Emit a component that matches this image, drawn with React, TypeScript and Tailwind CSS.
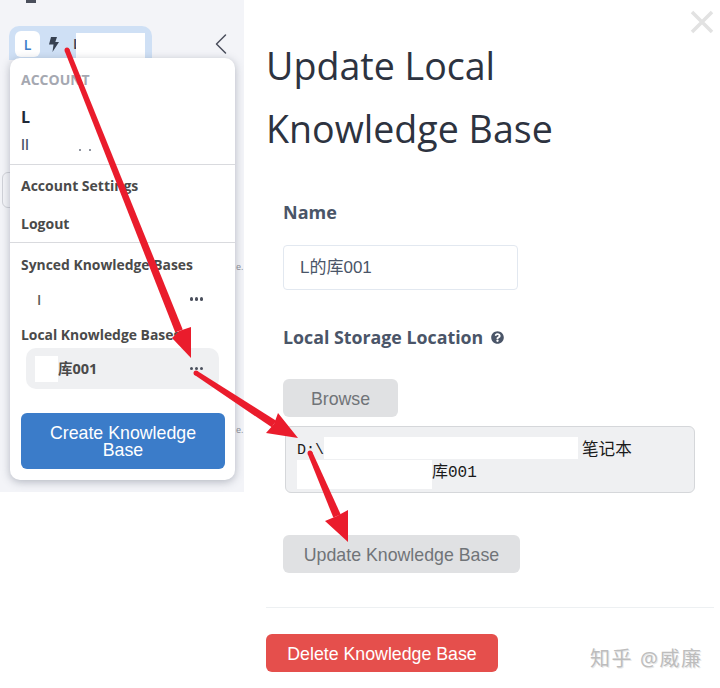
import React from 'react';
import { ChevronLeft } from 'lucide-react';
import { FaQuestionCircle } from 'react-icons/fa';

const sans = { fontFamily: '"Open Sans", "Noto Sans CJK SC", sans-serif' };
const arial = { fontFamily: '"Liberation Sans", "Noto Sans CJK SC", sans-serif' };

const Dots = () => (
  <span className="flex gap-[1.5px]">
    <span className="w-[3.5px] h-[3.5px] rounded-full bg-[#4a4f5c]" />
    <span className="w-[3.5px] h-[3.5px] rounded-full bg-[#4a4f5c]" />
    <span className="w-[3.5px] h-[3.5px] rounded-full bg-[#4a4f5c]" />
  </span>
);

type ArrowProps = { from: number[]; notch: number[]; a: number[]; b: number[]; tip: number[] };

// shaft gets thicker towards the head, like a hand-drawn annotation
const Arrow = ({ from, notch, a, b, tip }: ArrowProps) => {
  const len = Math.hypot(notch[0] - from[0], notch[1] - from[1]);
  const nx = -(notch[1] - from[1]) / len;
  const ny = (notch[0] - from[0]) / len;
  const shaft = [
    [from[0] + nx * 2.5, from[1] + ny * 2.5],
    [notch[0] + nx * 4, notch[1] + ny * 4],
    [notch[0] - nx * 4, notch[1] - ny * 4],
    [from[0] - nx * 2.5, from[1] - ny * 2.5],
  ];
  return (
    <g fill="#ea1c2c">
      <circle cx={from[0]} cy={from[1]} r="2.5" />
      <polygon points={shaft.map((p) => p.join(',')).join(' ')} />
      <polygon points={[tip, a, notch, b].map((p) => p.join(',')).join(' ')} />
    </g>
  );
};

const Sidebar = () => (
  <div className="relative w-[244px] h-[492px] shrink-0 bg-[#f3f4f8] overflow-hidden">
    {/* bits of the page behind the menu */}
    <span className="absolute left-[26px] top-0 w-[10px] h-[3px] bg-[#4a4f5c]" />
    <span className="absolute left-[2px] top-[172px] w-[20px] h-[36px] border border-[#d0d2d8] rounded-[6px]" />
    <span className="absolute left-[236px] top-[260px] text-[9px] leading-[14px] text-[#8d919b]">e.</span>
    <span className="absolute left-[236px] top-[423px] text-[9px] leading-[14px] text-[#8d919b]">e.</span>

    <div className="pl-[9px] pr-[5px] pt-[26px] flex items-start justify-between">
      <div className="w-[143px] h-[34px] bg-[#cfe0f5] rounded-t-[10px] pl-[6px] pt-[5px] flex items-start">
        <span className="w-[25px] h-[26px] bg-white rounded-[6px] flex items-center justify-center text-[14px] font-semibold text-[#3b7cc9]">
          L
        </span>
        <svg viewBox="0 0 10 15" className="w-[10px] h-[15px] ml-[9px] mt-[6px]">
          <path d="M2 0h6L6.3 5H10L3.5 15l1-7.5H0z" fill="#374151" />
        </svg>
        <span className="ml-[14px] mt-[3px] text-[14px] font-semibold text-[#374151] leading-[20px]">L</span>
        <span className="relative -ml-[5px] w-[69px] h-[25px] bg-white mt-[2px]" />
      </div>
      <ChevronLeft className="w-[36px] h-[36px] text-[#4a4f5c]" strokeWidth={1} />
    </div>

    <div className="absolute left-[10px] top-[58px] w-[225px] h-[422px] bg-white rounded-[10px] shadow-[0_2px_8px_rgba(60,70,90,0.35)] flex flex-col text-[14px] font-bold text-[#4a4a4a]">
      <div className="h-[107px] border-b border-[#d9dade] px-[11px] pt-[12px]">
        <div className="text-[#a5a8b1] leading-[20px] text-[14px]">ACCOUNT</div>
        <div className="text-[16px] text-[#1f2937] leading-[22px] mt-[16px]">L</div>
        <div className="flex items-start mt-[7px]">
          <span className="text-[#4a5568] leading-[20px] font-semibold">ll</span>
          <span className="ml-[50px] mt-[14px] w-[2px] h-[2px] rounded-full bg-[#6b7280]" />
          <span className="ml-[8px] mt-[14px] w-[2px] h-[2px] rounded-full bg-[#6b7280]" />
        </div>
      </div>
      <div className="h-[78px] border-b border-[#d9dade] px-[11px] pt-[11px] flex flex-col gap-[18px]">
        <div className="leading-[20px]">Account Settings</div>
        <div className="leading-[20px]">Logout</div>
      </div>
      <div className="px-[11px] pt-[12px]">
        <div className="leading-[20px] text-[13.9px]">Synced Knowledge Bases</div>
        <div className="h-[20px] mt-[14px] pl-[16px] pr-[21px] flex items-center justify-between">
          <span className="font-semibold text-[#5a5a5a]">I</span>
          <Dots />
        </div>
        <div className="leading-[20px] mt-[16px] text-[13.9px]">Local Knowledge Bases</div>
        <div className="h-[41px] mt-[3px] mx-[5px] bg-[#eff0f2] rounded-[10px] pl-[9px] pr-[16px] flex items-center justify-between">
          <span className="flex items-center text-[14.5px]" style={sans}>
            <span className="w-[23px] h-[26px] bg-white" />
            库001
          </span>
          <Dots />
        </div>
        <button
          className="w-[204px] h-[56px] mt-[24px] pt-[2px] bg-[#3b7cc9] rounded-[6px] px-[14px] text-[17.75px] leading-[17px] font-normal text-white"
          style={arial}
        >
          Create Knowledge Base
        </button>
      </div>
    </div>
  </div>
);

const grayBtn = 'h-[38px] pt-[2px] bg-[#e0e1e3] rounded-[6px] text-[17.75px] text-[#707478]';

const Form = () => (
  <div className="relative flex-1 pl-[22px] pr-[6px] pt-[34px]">
    <svg viewBox="0 0 24 24" className="absolute right-[6px] top-[10px] w-[24px] h-[24px]">
      <path d="M2 2l20 20M22 2L2 22" stroke="#e2e2e2" strokeWidth="3.5" fill="none" />
    </svg>
    <h1 className="text-[37.6px] leading-[63px] text-[#2d3340] font-normal">
      Update Local
      <br />
      Knowledge Base
    </h1>
    <div className="pl-[17px] mt-[40px]">
      <label className="block text-[18px] leading-[24px] font-bold text-[#4a5568]">Name</label>
      <div
        className="mt-[21px] w-[235px] h-[45px] border border-[#e2e8f0] rounded-[4px] pl-[16px] flex items-center text-[17px] text-[#4a5568]"
        style={arial}
      >
        L的库001
      </div>
      <label className="flex items-center mt-[35px] text-[17.8px] leading-[24px] font-bold text-[#4a5568]">
        Local Storage Location
        <FaQuestionCircle className="ml-[8px] w-[13px] h-[13px] text-[#4a5568]" />
      </label>
      <button className={`mt-[30px] w-[115px] block ${grayBtn}`} style={arial}>
        Browse
      </button>
      <div
        className="mt-[9px] ml-[2px] w-[410px] h-[67px] bg-[#eff0f2] border border-[#d5d7da] rounded-[6px] pl-[11px] pt-[10px] text-[16px] text-[#1a1a1a]"
        style={{ fontFamily: '"Liberation Mono", "Noto Sans CJK SC", monospace' }}
      >
        <div className="h-[23px] flex items-start">
          <span className="leading-[28px] text-[15px]">D:\</span>
          <span className="w-[254px] h-[22px] bg-white" />
          <span className="ml-[4px] leading-[28px] text-[16.6px]">笔记本</span>
        </div>
        <div className="h-[29px] flex items-start">
          <span className="w-[135px] h-[29px] bg-white" />
          <span className="leading-[26px]">库001</span>
        </div>
      </div>
      <button className={`mt-[42px] w-[237px] block ${grayBtn}`} style={arial}>
        Update Knowledge Base
      </button>
    </div>
    <div className="mt-[34px] h-px bg-[#edf0f2]" />
    <button
      className="mt-[26px] pt-[2px] w-[232px] h-[38px] block bg-[#e54f4c] rounded-[6px] text-[17.75px] text-white"
      style={arial}
    >
      Delete Knowledge Base
    </button>
    <div
      className="absolute left-[346px] top-[646px] text-[20px] leading-[26px] text-[#bdbdbd] tracking-[1.6px] [text-shadow:1px_1px_0_#e8e8e8]"
      style={sans}
    >
      知乎 @威廉
    </div>
  </div>
);

export default function App() {
  return (
    <div className="relative w-[720px] h-[688px] bg-white flex overflow-hidden" style={sans}>
      <Sidebar />
      <Form />
      <svg className="absolute inset-0 w-[720px] h-[688px] pointer-events-none" viewBox="0 0 720 688">
        <Arrow from={[67, 50]} notch={[179, 331]} a={[172, 338]} b={[191, 327]} tip={[191, 358]} />
        <Arrow from={[196, 373]} notch={[274, 424]} a={[278, 413]} b={[266, 433]} tip={[298, 438]} />
        <Arrow from={[310, 453]} notch={[337, 516]} a={[325, 521]} b={[348, 510]} tip={[348, 542]} />
      </svg>
    </div>
  );
}
